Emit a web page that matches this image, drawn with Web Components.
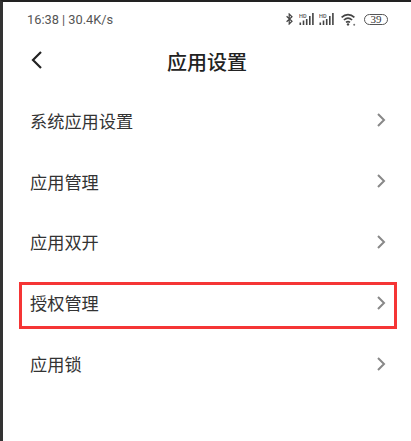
<!DOCTYPE html>
<html lang="zh">
<head>
<meta charset="utf-8">
<title>应用设置</title>
<style>
html, body { margin: 0; padding: 0; background: #fff; }
body { width: 411px; height: 441px; overflow: hidden; }
</style>
</head>
<body>
<phone-frame>
    <status-bar></status-bar>
    <nav-header title="应用设置"></nav-header>
    <settings-list>
        <settings-row>系统应用设置</settings-row>
        <settings-row>应用管理</settings-row>
        <settings-row>应用双开</settings-row>
        <settings-row marked>授权管理</settings-row>
        <settings-row>应用锁</settings-row>
    </settings-list>
</phone-frame>
<script>
'use strict'

class PhoneFrame extends HTMLElement {

    constructor() {
        super();
        const shadow = this.attachShadow({mode: 'open'});
        shadow.innerHTML = `
            <style>
            :host {
                display: block;
                box-sizing: border-box;
                width: 411px;
                height: 441px;
                background: #fff;
                border-top: 2px solid #222;
                border-left: 3px solid #333;
                color: #333;
                font-family: "Roboto", "Noto Sans CJK SC", sans-serif;
            }
            </style>
            <slot></slot>
        `;
    }
}

class StatusBar extends HTMLElement {

    constructor() {
        super();
        const shadow = this.attachShadow({mode: 'open'});
        shadow.innerHTML = `
            <style>
            :host {
                display: flex;
                align-items: center;
                justify-content: space-between;
                height: 34px;
                padding: 0 23px 0 24px;
                color: #555;
                font-size: 12.8px;
            }
            .icons {
                display: flex;
                align-items: center;
            }
            svg {
                display: block;
            }
            .bluetooth {
                margin-right: 6px;
            }
            .signal + .signal {
                margin-left: 5px;
            }
            .wifi {
                margin: 0 8px 0 7px;
            }
            .battery {
                box-sizing: border-box;
                width: 24px;
                height: 11px;
                border: 1px solid #555;
                border-radius: 6px;
                color: #333;
                font-family: "Liberation Serif", serif;
                font-size: 11px;
                line-height: 9px;
                text-align: center;
            }
            </style>
            <span>16:38 | 30.4K/s</span>
            <div class="icons">
                <svg class="bluetooth" width="7" height="12" viewBox="0 0 7 12" fill="none" stroke="#444" stroke-width="1.2">
                    <path d="M.6 3.2 6 8.3 3.2 11V1L6 3.7 .6 8.8"/>
                </svg>
                ${this.signal()}
                ${this.signal()}
                <svg class="wifi" width="15" height="13" viewBox="0 0 15 13" fill="none" stroke="#444" stroke-width="1.6">
                    <path d="M.6 4.4C4.4 .7 9.6 .7 13.4 4.4"/>
                    <path d="M2.9 7C5.4 4.7 8.6 4.7 11.1 7"/>
                    <path d="M5 9.4C6.2 8.4 7.8 8.4 9 9.4"/>
                    <circle cx="7" cy="11.4" r="1.2" fill="#444" stroke="none"/>
                    <circle cx="13.2" cy="11.8" r="1" fill="#777" stroke="none"/>
                </svg>
                <div class="battery">39</div>
            </div>
        `;
    }

    signal() {
        return `
            <svg class="signal" width="15" height="12" viewBox="0 0 15 12" fill="#444">
                <text x="0" y="5" font-family="Roboto, sans-serif" font-size="5.5" font-weight="500" fill="#555">HD</text>
                <rect x="0.5" y="9.5" width="1.6" height="2.5"/>
                <rect x="3.7" y="7.5" width="1.6" height="4.5"/>
                <rect x="6.9" y="6" width="1.6" height="6"/>
                <rect x="10" y="3" width="1.6" height="9"/>
                <rect x="13.1" y="0" width="1.6" height="12"/>
            </svg>
        `;
    }
}

class NavHeader extends HTMLElement {

    constructor() {
        super();
        const shadow = this.attachShadow({mode: 'open'});
        shadow.innerHTML = `
            <style>
            :host {
                display: grid;
                grid-template-columns: 1fr auto 1fr;
                align-items: center;
                height: 50px;
                padding: 0 24px 0 27px;
            }
            svg {
                display: block;
            }
            h1 {
                margin: 0 3px 0 0;
                color: #222;
                font-size: 20px;
                font-weight: 500;
            }
            </style>
            <svg width="14" height="20" viewBox="0 0 14 20" fill="none" stroke="#222" stroke-width="2.2">
                <path d="M11 1 3 9 11 17"/>
            </svg>
            <h1>${this.getAttribute('title')}</h1>
        `;
    }
}

class SettingsList extends HTMLElement {

    constructor() {
        super();
        const shadow = this.attachShadow({mode: 'open'});
        shadow.innerHTML = `
            <style>
            :host {
                display: flex;
                flex-direction: column;
                padding-top: 4px;
            }
            </style>
            <slot></slot>
        `;
    }
}

class SettingsRow extends HTMLElement {

    constructor() {
        super();
        const shadow = this.attachShadow({mode: 'open'});
        shadow.innerHTML = `
            <style>
            :host {
                display: flex;
                position: relative;
                align-items: center;
                justify-content: space-between;
                height: 60.8px;
                padding: 0 25px 0 27px;
                color: #333;
                font-size: 17.2px;
            }
            svg {
                display: block;
            }
            .mark {
                display: none;
                position: absolute;
                left: 16px;
                top: 9.5px;
                box-sizing: border-box;
                width: 378px;
                height: 47px;
                border: 3px solid #f53535;
            }
            :host([marked]) .mark {
                display: block;
            }
            </style>
            <slot></slot>
            <svg width="10" height="16" viewBox="0 0 10 16" fill="none" stroke="#888" stroke-width="2">
                <path d="M2 2 8 8 2 14"/>
            </svg>
            <div class="mark"></div>
        `;
    }
}

customElements.define('phone-frame', PhoneFrame);
customElements.define('status-bar', StatusBar);
customElements.define('nav-header', NavHeader);
customElements.define('settings-list', SettingsList);
customElements.define('settings-row', SettingsRow);
</script>
</body>
</html>
